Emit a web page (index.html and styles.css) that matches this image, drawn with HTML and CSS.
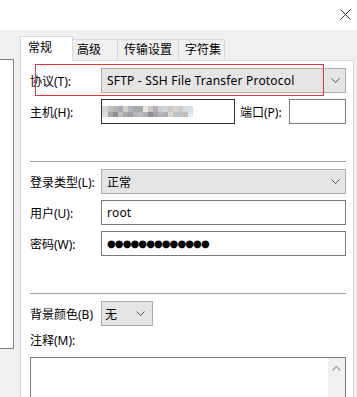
FILE: index.html
```html
<!DOCTYPE html>
<html lang="zh-CN">
<head>
<meta charset="UTF-8">
<title>站点属性</title>
<link rel="stylesheet" href="styles.css">
</head>
<body>
<div class="window">
    <div class="titlebar">
        <svg class="close" width="11" height="11" viewBox="0 0 11 11">
            <path d="M0.5 0.5 L10.5 10.5 M10.5 0.5 L0.5 10.5" stroke="#333" stroke-width="1" fill="none"/>
        </svg>
    </div>
    <div class="main">
        <div class="sidepanel"></div>
        <div class="tabs-area">
            <div class="tabs">
                <div class="tab active tab-general">常规</div>
                <div class="tab tab-adv">高级</div>
                <div class="tab tab-transfer">传输设置</div>
                <div class="tab tab-charset">字符集</div>
            </div>
            <div class="panel">
                <div class="row">
                    <label class="lbl">协议(T):</label>
                    <div class="combo wide">
                        <span class="latin">SFTP - SSH File Transfer Protocol</span>
                        <svg class="chev" width="9" height="5" viewBox="0 0 9 5"><path d="M0.5 0.5 L4.5 4.5 L8.5 0.5" stroke="#555" fill="none"/></svg>
                    </div>
                </div>
                <div class="row">
                    <label class="lbl">主机(H):</label>
                    <div class="input host">
                        <svg width="96" height="11" viewBox="0 0 96 11">
                            <rect x="0" y="0" width="6" height="6" fill="#d6d6d6"/>
                            <rect x="6" y="0" width="5" height="6" fill="#c2bfbc"/>
                            <rect x="11" y="0" width="5" height="6" fill="#b7b4b2"/>
                            <rect x="16" y="0" width="5" height="6" fill="#a9acb2"/>
                            <rect x="21" y="0" width="5" height="6" fill="#d3cfcb"/>
                            <rect x="26" y="0" width="5" height="6" fill="#b1b5bd"/>
                            <rect x="31" y="0" width="5" height="6" fill="#a6aab2"/>
                            <rect x="36" y="0" width="5" height="6" fill="#a3a9a3"/>
                            <rect x="41" y="0" width="5" height="6" fill="#ebe7e3"/>
                            <rect x="46" y="0" width="5" height="6" fill="#c9c5c9"/>
                            <rect x="51" y="0" width="5" height="6" fill="#b9b1b9"/>
                            <rect x="56" y="0" width="5" height="6" fill="#cbcfd3"/>
                            <rect x="61" y="0" width="5" height="6" fill="#d2d6da"/>
                            <rect x="66" y="0" width="5" height="6" fill="#c6cacd"/>
                            <rect x="71" y="0" width="5" height="6" fill="#d9d1c9"/>
                            <rect x="76" y="0" width="5" height="6" fill="#c7ccd2"/>
                            <rect x="81" y="0" width="5" height="6" fill="#d8ddd9"/>
                            <rect x="86" y="0" width="5" height="6" fill="#d5e2ee"/>
                            <rect x="0" y="6" width="6" height="5" fill="#dcdcdc"/>
                            <rect x="6" y="6" width="5" height="5" fill="#a8a6a4"/>
                            <rect x="11" y="6" width="5" height="5" fill="#8e8f90"/>
                            <rect x="16" y="6" width="5" height="5" fill="#c5bcb8"/>
                            <rect x="21" y="6" width="5" height="5" fill="#a4a8b0"/>
                            <rect x="26" y="6" width="5" height="5" fill="#9da2aa"/>
                            <rect x="31" y="6" width="5" height="5" fill="#b5b5bb"/>
                            <rect x="36" y="6" width="5" height="5" fill="#bfbdc1"/>
                            <rect x="41" y="6" width="5" height="5" fill="#b3aeb4"/>
                            <rect x="46" y="6" width="5" height="5" fill="#8f8d92"/>
                            <rect x="51" y="6" width="5" height="5" fill="#a9a4ab"/>
                            <rect x="56" y="6" width="5" height="5" fill="#b3b5bb"/>
                            <rect x="61" y="6" width="5" height="5" fill="#a9b0b6"/>
                            <rect x="66" y="6" width="5" height="5" fill="#e0d6c8"/>
                            <rect x="71" y="6" width="5" height="5" fill="#bcc4ca"/>
                            <rect x="76" y="6" width="5" height="5" fill="#b6c5cf"/>
                            <rect x="81" y="6" width="5" height="5" fill="#c6bdb1"/>
                            <rect x="86" y="6" width="5" height="5" fill="#e1e9f2"/>
                        </svg>
                    </div>
                    <label class="lbl port-lbl">端口(P):</label>
                    <div class="input port"></div>
                </div>
                <div class="divider"></div>
                <div class="row">
                    <label class="lbl">登录类型(L):</label>
                    <div class="combo wide">
                        <span>正常</span>
                        <svg class="chev" width="9" height="5" viewBox="0 0 9 5"><path d="M0.5 0.5 L4.5 4.5 L8.5 0.5" stroke="#555" fill="none"/></svg>
                    </div>
                </div>
                <div class="row">
                    <label class="lbl">用户(U):</label>
                    <div class="input wide"><span class="latin">root</span></div>
                </div>
                <div class="row">
                    <label class="lbl">密码(W):</label>
                    <div class="input wide"><span class="dots">●●●●●●●●●●●●●</span></div>
                </div>
                <div class="divider"></div>
                <div class="row">
                    <label class="lbl">背景颜色(B)</label>
                    <div class="combo small">
                        <span>无</span>
                        <svg class="chev" width="9" height="5" viewBox="0 0 9 5"><path d="M0.5 0.5 L4.5 4.5 L8.5 0.5" stroke="#555" fill="none"/></svg>
                    </div>
                </div>
                <div class="note-lbl">注释(M):</div>
                <div class="textarea">
                    <div class="scrollbar">
                        <svg width="9" height="5" viewBox="0 0 9 5"><path d="M0.5 4.5 L4.5 0.5 L8.5 4.5" stroke="#a6a6a6" stroke-width="1.4" fill="none"/></svg>
                    </div>
                </div>
            </div>
        </div>
    </div>
    <div class="highlight"></div>
</div>
</body>
</html>
```

FILE: styles.css
```css
html, body {
    margin: 0;
    padding: 0;
}
body {
    width: 357px;
    height: 397px;
    overflow: hidden;
    font-family: "Noto Sans", "Noto Sans CJK SC", sans-serif;
    font-size: 12px;
    color: #000;
    background: #f0f0f0;
}
.window {
    position: relative;
    height: 397px;
    overflow: hidden;
}
.titlebar {
    height: 30px;
    background: #fff;
    display: flex;
    justify-content: flex-end;
    align-items: flex-start;
}
.close {
    margin-top: 9px;
    margin-right: 6px;
}
.main {
    display: flex;
    align-items: flex-start;
}
.sidepanel {
    width: 13px;
    height: 288px;
    margin-top: 29px;
    background: #fff;
    border: 1px solid #828282;
    border-left: none;
}
.tabs-area {
    margin-left: 6px;
    margin-top: 6px;
}
.tabs {
    display: flex;
    align-items: flex-end;
    height: 24px;
}
.tab {
    box-sizing: border-box;
    height: 21px;
    line-height: 19px;
    border: 1px solid #d9d9d9;
    border-bottom: none;
    background: #f0f0f0;
    margin-left: -1px;
    padding-left: 6px;
}
.tab.active {
    height: 25px;
    line-height: 22px;
    background: #fff;
    margin-left: 0;
    margin-bottom: -1px;
    position: relative;
    z-index: 1;
    padding-left: 7px;
}
.tab-general { width: 53px; }
.tab-adv { width: 46px; padding-left: 4px; }
.tab-transfer { width: 62px; }
.tab-charset { width: 47px; }

.panel {
    box-sizing: border-box;
    width: 334px;
    height: 340px;
    background: #fff;
    border: 1px solid #d9d9d9;
    padding: 7px 7px 0 9px;
}
.row {
    display: flex;
    align-items: center;
    height: 25px;
    margin-bottom: 6px;
}
.lbl {
    width: 71px;
    flex: none;
    white-space: nowrap;
}
.combo, .input {
    box-sizing: border-box;
    height: 25px;
    display: flex;
    align-items: center;
    padding-left: 5px;
}
.combo {
    background: #e5e5e5;
    border: 1px solid #adadad;
    justify-content: space-between;
    padding-right: 5px;
}
.input {
    background: #fff;
    border: 1px solid #7a7a7a;
}
.latin {
    letter-spacing: 0.2px;
}
.wide { width: 245px; }
.small { width: 52px; padding-left: 3px; padding-right: 7px; }
.host {
    width: 134px;
    border-color: #333;
    padding-left: 0;
}
.port-lbl {
    width: 49px;
    margin-left: 5px;
}
.port { width: 57px; }
.dots {
    font-family: "DejaVu Sans", sans-serif;
    font-size: 10px;
    letter-spacing: -0.9px;
}
.divider {
    height: 1px;
    width: 316px;
    background: #a0a0a0;
    margin: 37px 0 7px;
}
.note-lbl {
    height: 18px;
    line-height: 18px;
}
.textarea {
    box-sizing: border-box;
    width: 316px;
    height: 60px;
    margin-top: 7px;
    border: 1px solid #7a7a7a;
    display: flex;
    justify-content: flex-end;
}
.scrollbar {
    width: 17px;
    background: #f0f0f0;
    display: flex;
    justify-content: center;
    padding-top: 8px;
}
.highlight {
    position: absolute;
    left: 35px;
    top: 64px;
    width: 287px;
    height: 30px;
    border: 1px solid #e4393c;
}
```
